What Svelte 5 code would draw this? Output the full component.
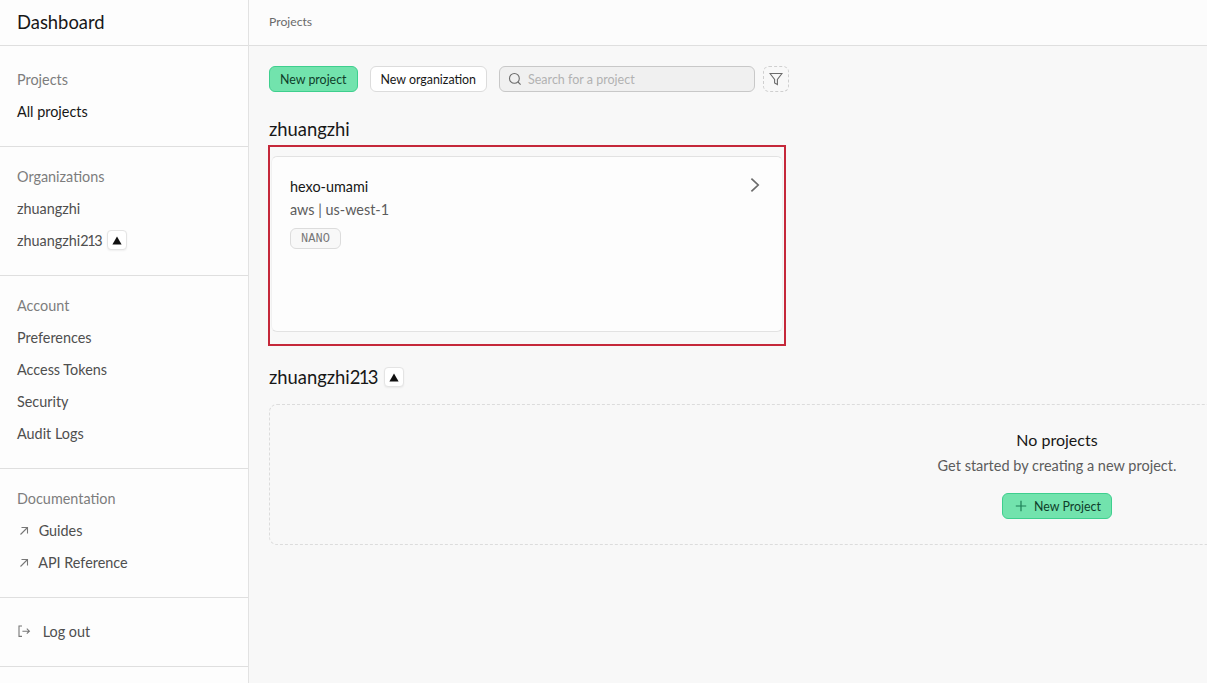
<script>
	const groups = [
		{ title: 'Account', items: ['Preferences', 'Access Tokens', 'Security', 'Audit Logs'] }
	];
</script>

{#snippet triangle()}
	<span class="tier"><svg width="10" height="9" viewBox="0 0 10 9"><path d="M5 0.5 L9.6 8.5 H0.4 Z" fill="#111" /></svg></span>
{/snippet}

{#snippet external()}
	<svg class="ext" width="12" height="12" viewBox="0 0 12 12" fill="none" stroke="#777" stroke-width="1.1"><path d="M4.5 3.5 H10.5 V9.5 M10.5 3.5 L3.5 10.5" /></svg>
{/snippet}

<div class="app">
	<aside class="sidebar">
		<div class="brand">Dashboard</div>
		<section class="group first">
			<div class="label">Projects</div>
			<div class="row active">All projects</div>
		</section>
		<section class="group">
			<div class="label">Organizations</div>
			<div class="row">zhuangzhi</div>
			<div class="row">zhuangzhi<span class="num">213</span>{@render triangle()}</div>
		</section>
		{#each groups as group}
			<section class="group">
				<div class="label">{group.title}</div>
				{#each group.items as item}
					<div class="row">{item}</div>
				{/each}
			</section>
		{/each}
		<section class="group">
			<div class="label">Documentation</div>
			<div class="row link">{@render external()} Guides</div>
			<div class="row link">{@render external()} API Reference</div>
		</section>
		<section class="group first">
			<div class="row logout">
				<svg width="14" height="14" viewBox="0 0 14 14" fill="none" stroke="#777" stroke-width="1.1">
					<path d="M5 2 H2 V12.4 H5 M5.4 7.2 H12.4 M9.8 4.7 L12.4 7.2 L9.8 9.7" />
				</svg>
				Log out
			</div>
		</section>
	</aside>

	<main class="main">
		<header class="crumb">Projects</header>
		<div class="content">
			<div class="toolbar">
				<button class="btn primary" type="button">New project</button>
				<button class="btn" type="button">New organization</button>
				<div class="search">
					<svg width="14" height="14" viewBox="0 0 14 14" fill="none" stroke="#6b6b6b" stroke-width="1.1">
						<circle cx="6.4" cy="6.4" r="4.9" /><path d="M10 10 L12.6 12.6" />
					</svg>
					<span>Search for a project</span>
				</div>
				<button class="filter" type="button" aria-label="Filter">
					<svg width="14" height="14" viewBox="0 0 14 14" fill="none" stroke="#6b6b6b" stroke-width="1.1">
						<path d="M1 1.5 H13 L8.4 7.4 V12.6 L5.6 11 V7.4 Z" />
					</svg>
				</button>
			</div>

			<h2 class="org">zhuangzhi</h2>
			<div class="highlight">
				<div class="card">
					<div class="card-top">
						<div class="name">hexo-umami</div>
						<svg class="chevron" width="12" height="16" viewBox="0 0 12 16" fill="none" stroke="#6b6b6b" stroke-width="1.7"><path d="M2.4 1.6 L9.2 8 L2.4 14.4" /></svg>
					</div>
					<div class="region">aws | us-west-1</div>
					<span class="badge">NANO</span>
				</div>
			</div>

			<h2 class="org second">zhuangzhi<span class="num">213</span>{@render triangle()}</h2>
			<div class="empty">
				<div class="empty-title">No projects</div>
				<div class="empty-text">Get started by creating a new project.</div>
				<button class="btn primary new" type="button">
					<svg width="12" height="12" viewBox="0 0 12 12" fill="none" stroke="#1d7f56" stroke-width="1.2"><path d="M6 .8 V11.2 M.8 6 H11.2" /></svg>
					New Project
				</button>
			</div>
		</div>
	</main>
</div>

<style>
	:global(body) {
		overflow: hidden;
		background: #f8f8f8;
	}

	.app {
		display: flex;
		width: 1207px;
		height: 683px;
		overflow: hidden;
		font-family: Lato, 'Open Sans', sans-serif;
		color: #171717;
		font-size: 14.4px;
	}

	.sidebar {
		flex: 0 0 249px;
		box-sizing: border-box;
		border-right: 1px solid #e2e2e2;
		background: #fdfdfd;
	}

	.brand {
		box-sizing: border-box;
		height: 46px;
		padding: 10px 17px 0;
		border-bottom: 1px solid #dfdfdf;
		font-size: 18.4px;
		line-height: 24px;
	}

	.group {
		padding: 13px 17px 19px;
		border-bottom: 1px solid #dfdfdf;
	}

	.group.first {
		padding-top: 17px;
	}

	.label,
	.row {
		display: flex;
		align-items: center;
		box-sizing: border-box;
		height: 32px;
		white-space: pre;
	}

	.label {
		color: #7d7d7d;
	}

	.row {
		color: #4f4f4f;
	}

	.row.active {
		color: #171717;
	}

	.num {
		letter-spacing: -0.09em;
	}

	.ext {
		margin-right: 6px;
	}

	.logout {
		gap: 8px;
	}

	.tier {
		display: inline-flex;
		align-items: center;
		justify-content: center;
		width: 20px;
		height: 20px;
		margin-left: 6px;
		box-sizing: border-box;
		border: 1px solid #e4e4e4;
		border-radius: 4px;
		background: #fff;
		box-shadow: 0 1px 2px rgba(0, 0, 0, 0.06);
	}

	.main {
		flex: 1;
		min-width: 0;
	}

	.crumb {
		box-sizing: border-box;
		height: 46px;
		padding: 14px 20px 0;
		border-bottom: 1px solid #dfdfdf;
		background: #fcfcfc;
		color: #6a6a6a;
		font-size: 12.2px;
		line-height: 16px;
	}

	.content {
		padding: 20px 0 0 20px;
	}

	.toolbar {
		display: flex;
		align-items: center;
		height: 26px;
	}

	.btn {
		height: 26px;
		padding: 0 10px;
		border: 1px solid #dcdcdc;
		border-radius: 6px;
		background: #fff;
		color: #171717;
		font: inherit;
		font-size: 12.4px;
		margin-right: 12px;
	}

	.btn.primary {
		border-color: #3ecf8e;
		background: #72e3ad;
		color: #0f3d2a;
	}

	.search {
		display: flex;
		align-items: center;
		gap: 6px;
		box-sizing: border-box;
		width: 256px;
		height: 26px;
		padding: 0 8px;
		border: 1px solid #c8c8c8;
		border-radius: 6px;
		background: #f0f0f0;
		color: #b2b2b2;
		font-size: 12.5px;
	}

	.filter {
		display: flex;
		align-items: center;
		justify-content: center;
		width: 26px;
		height: 26px;
		margin-left: 8px;
		padding: 0;
		border: 1px dashed #cfcfcf;
		border-radius: 6px;
		background: transparent;
	}

	.org {
		display: flex;
		align-items: center;
		height: 24px;
		margin: 25px 0 4px;
		font-size: 18.4px;
		font-weight: 400;
		line-height: 24px;
		white-space: pre;
	}

	.org.second {
		margin: 19px 0 15px;
	}

	.org .tier {
		margin-left: 7px;
	}

	.highlight {
		box-sizing: border-box;
		width: 518px;
		height: 201px;
		margin-left: -1px;
		padding: 9px 1px 12px 1px;
		border: 2px solid #c5283a;
	}

	.card {
		box-sizing: border-box;
		height: 176px;
		padding: 19px 18px;
		border: 1px solid #e2e2e2;
		border-left-color: #f1f1f1;
		border-right-color: #f1f1f1;
		border-radius: 6px;
		background: #fdfdfd;
	}

	.card-top {
		display: flex;
		align-items: center;
		justify-content: space-between;
		height: 20px;
		padding-right: 3px;
	}

	.chevron {
		margin-top: -2px;
	}

	.name {
		color: #171717;
	}

	.region {
		margin-top: 4px;
		color: #5c5c5c;
		line-height: 20px;
	}

	.badge {
		display: inline-block;
		box-sizing: border-box;
		width: 51px;
		height: 21px;
		margin-top: 8px;
		border: 1px solid #dcdcdc;
		border-radius: 6px;
		background: #f8f8f8;
		color: #777;
		font-family: 'Liberation Mono', monospace;
		font-size: 12px;
		line-height: 20px;
		text-align: center;
	}

	.empty {
		box-sizing: border-box;
		display: flex;
		flex-direction: column;
		align-items: center;
		width: 1576px;
		height: 141px;
		padding-top: 25px;
		border: 1px dashed #dcdcdc;
		border-radius: 8px;
	}

	.empty-title {
		line-height: 20px;
		font-size: 16px;
	}

	.empty-text {
		margin-top: 6px;
		color: #5c5c5c;
		font-size: 14.5px;
		line-height: 20px;
	}

	.new {
		display: flex;
		align-items: center;
		gap: 7px;
		margin: 17px 0 0;
		padding: 0 10px 0 12px;
	}
</style>
